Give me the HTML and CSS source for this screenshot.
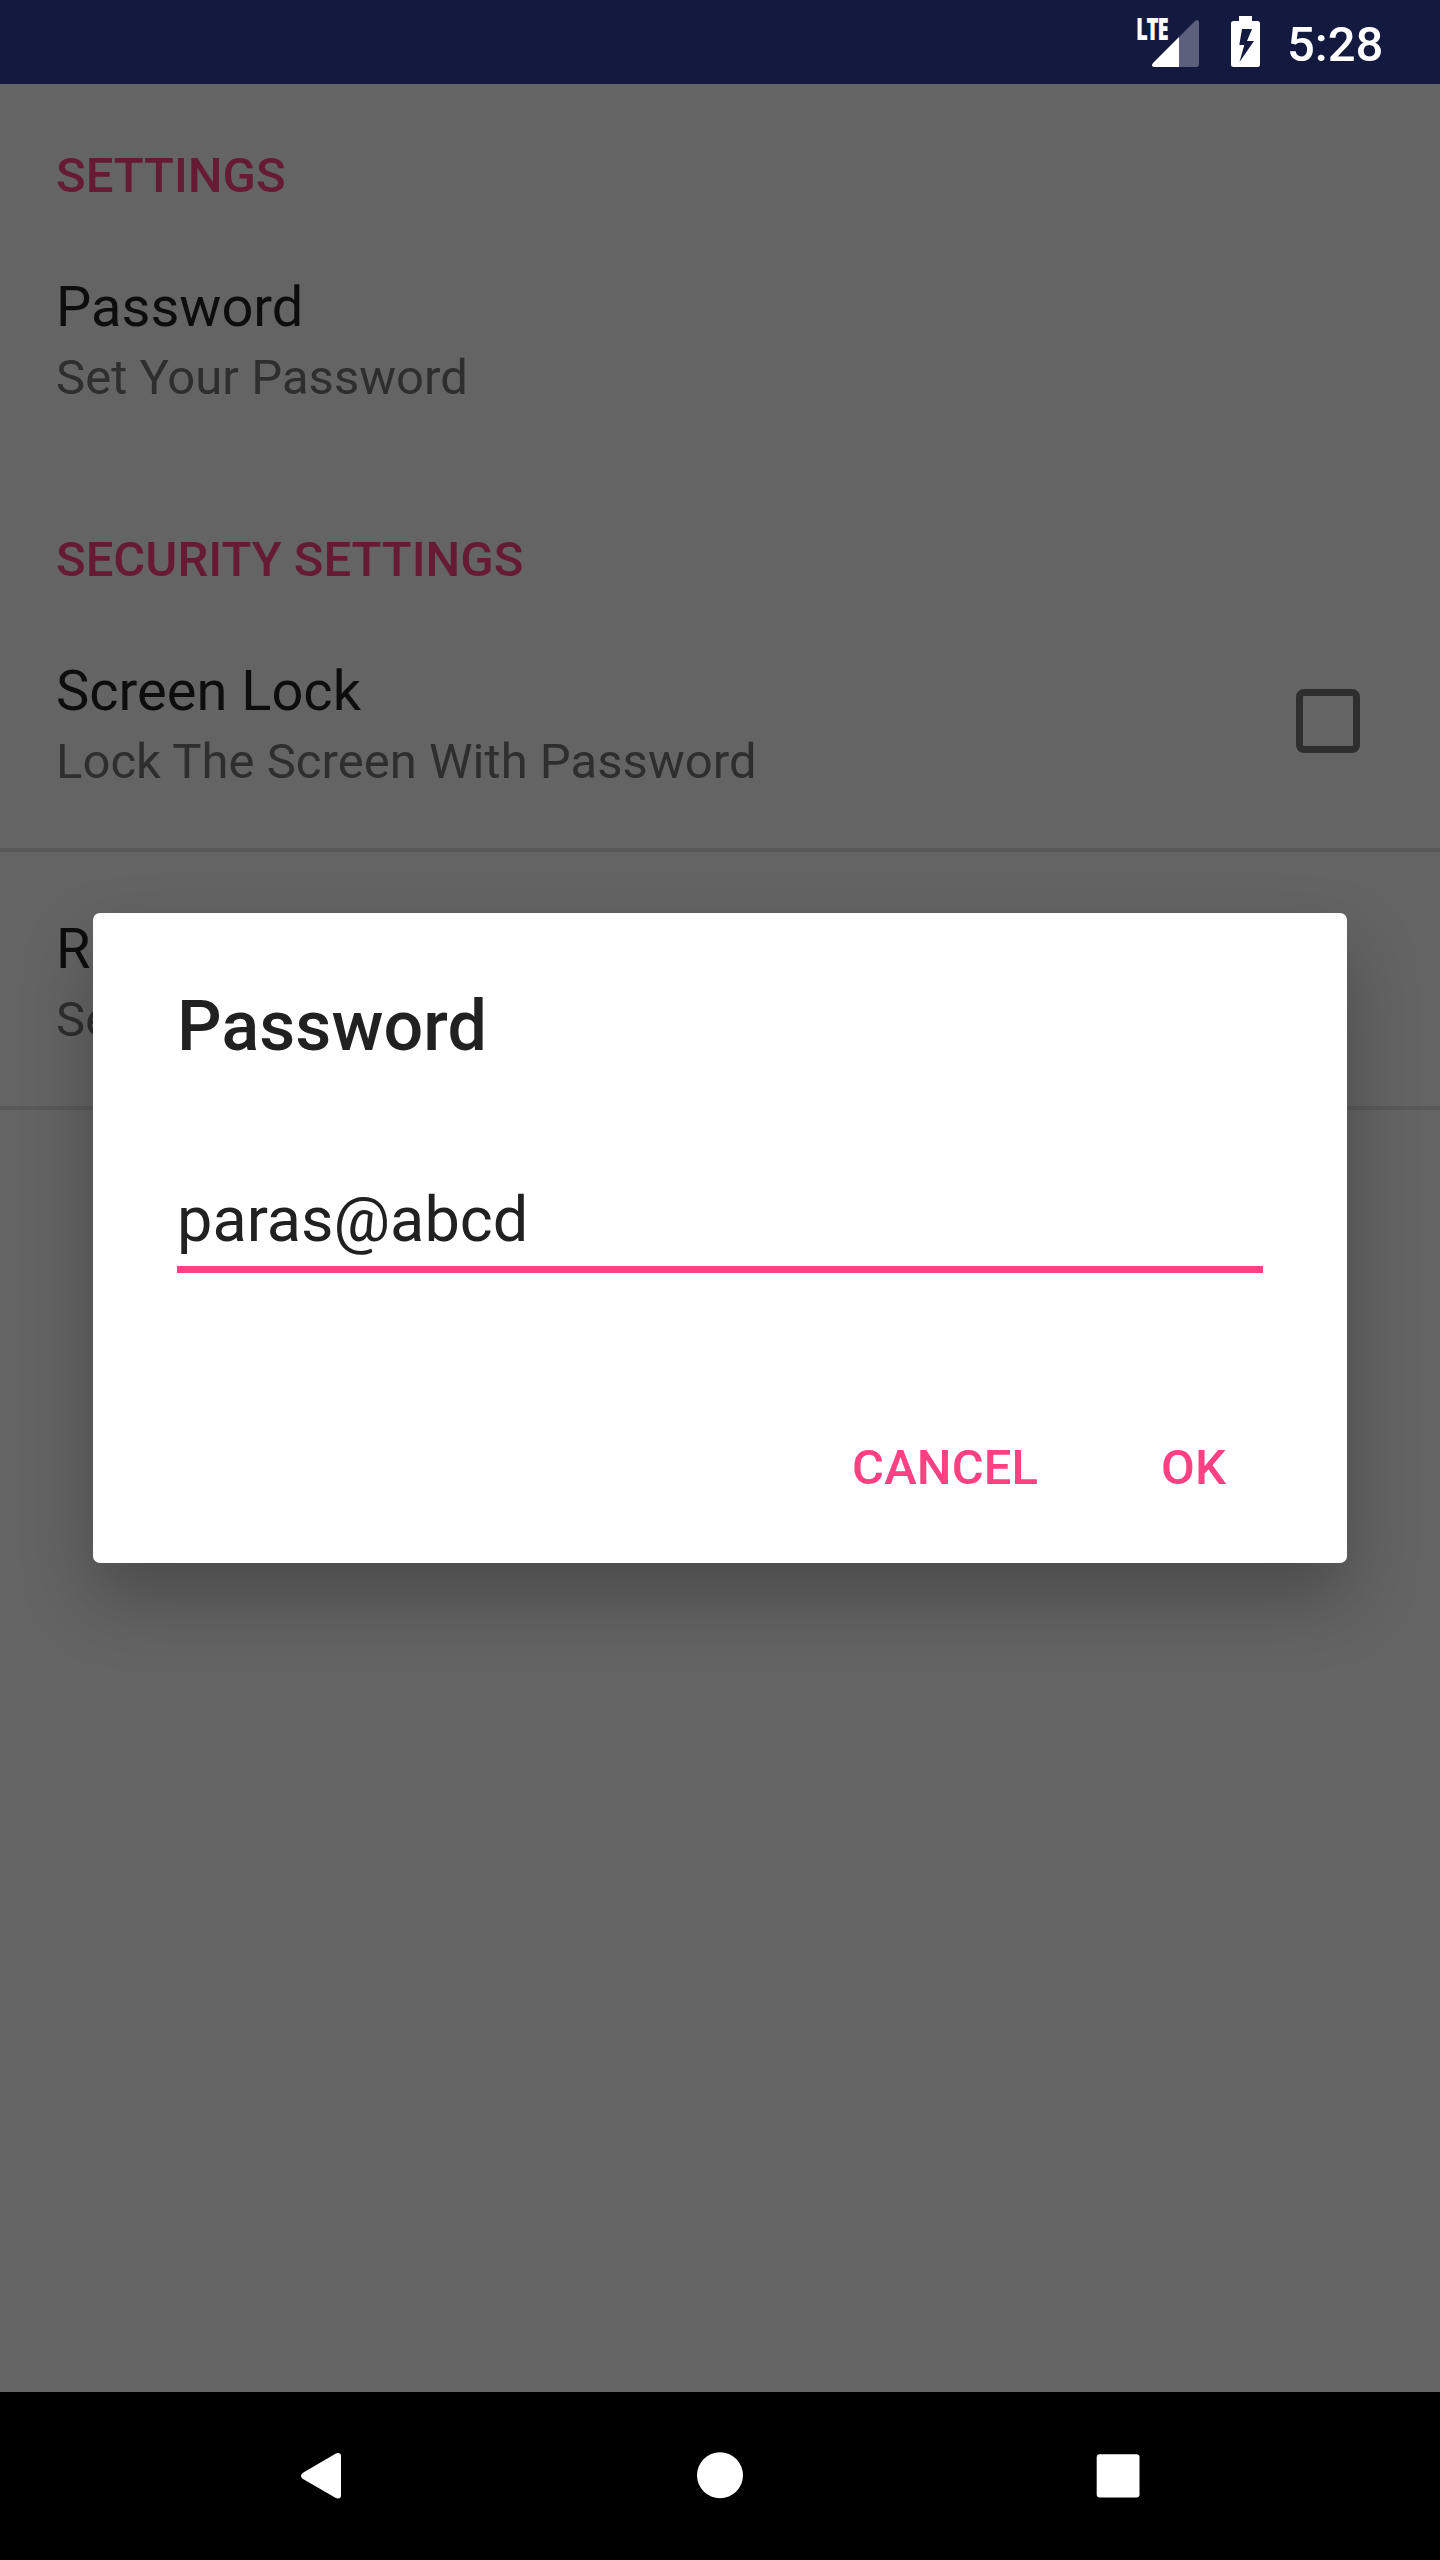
FILE: index.html
```html
<!DOCTYPE html>
<html lang="en">
<head>
<meta charset="utf-8">
<title>Settings</title>
<link rel="stylesheet" href="styles.css">
</head>
<body>
<div class="screen">
  <header class="status-bar">
    <svg class="signal" width="64" height="84" viewBox="1136 0 64 84">
      <text class="lte" transform="translate(1136 39.500) scale(.68 1)" x="0" y="0" textLength="48">LTE</text>
      <path d="M1179 37V67H1154Q1150.500 66 1153 63Z" fill="#fff"/>
      <path d="M1179 37L1195 21Q1199 18.500 1199 23V64Q1199 67 1196 67H1179Z" fill="#5d607c"/>
    </svg>
    <svg class="battery" width="30" height="84" viewBox="1231 0 30 84">
      <path fill="#fff" fill-rule="evenodd" d="M1239 16H1252V21H1257.500Q1260 21 1260 23.500V64.500Q1260 67 1257.500 67H1233.500Q1231 67 1231 64.500V23.500Q1231 21 1233.500 21H1239ZM1242 29L1239.300 45H1244.300L1239.500 62L1254 41H1247L1252 29Z"/>
    </svg>
    <span class="clock">5:28</span>
  </header>

  <main class="settings">
    <h2 class="category">SETTINGS</h2>
    <div class="row">
      <div class="row-text">
        <div class="row-title">Password</div>
        <div class="row-summary">Set Your Password</div>
      </div>
    </div>
    <h2 class="category">SECURITY SETTINGS</h2>
    <div class="row divided">
      <div class="row-text">
        <div class="row-title">Screen Lock</div>
        <div class="row-summary">Lock The Screen With Password</div>
      </div>
      <span class="checkbox"></span>
    </div>
    <div class="row divided">
      <div class="row-text">
        <div class="row-title">R</div>
        <div class="row-summary">Se</div>
      </div>
    </div>
  </main>

  <section class="dialog" role="dialog">
    <h1 class="dialog-title">Password</h1>
    <div class="field">paras@abcd</div>
    <div class="actions">
      <span>CANCEL</span>
      <span>OK</span>
    </div>
  </section>

  <nav class="nav-bar">
    <svg width="48" height="48" viewBox="0 0 48 48"><path d="M35 2Q36.500 1 38 1Q41 1 41 4V43.500Q41 46.500 38 46.500Q36.500 46.500 35 45.500L3 27Q1 25.500 1 24Q1 22 3 20.700Z" fill="#fff"/></svg>
    <svg width="48" height="48" viewBox="0 0 48 48"><circle cx="23" cy="23.300" r="23" fill="#fff"/></svg>
    <svg width="48" height="48" viewBox="0 0 48 48"><rect x="2.700" y="2.300" width="42.800" height="43.200" rx="3" fill="#fff"/></svg>
  </nav>
</div>
</body>
</html>
```

FILE: styles.css
```css
* {
  box-sizing: border-box;
}

body {
  margin: 0;
  font-family: Roboto, "Liberation Sans", sans-serif;
}

.screen {
  position: relative;
  display: flex;
  flex-direction: column;
  width: 1440px;
  height: 2560px;
  overflow: hidden;
  background: #646464;
}

.status-bar {
  display: flex;
  justify-content: flex-end;
  height: 84px;
  padding-right: 56px;
  background: #13193f;
}

.signal {
  margin-right: 31px;
}

.battery {
  margin-right: 26px;
}

.lte {
  font: 800 30px "Open Sans", sans-serif;
  fill: #fff;
}

.clock {
  padding-top: 16px;
  width: 97px;
  font-size: 49px;
  font-weight: 500;
  line-height: 58px;
  color: #fff;
}

.settings {
  flex: 1;
}

.category {
  margin: 0;
  padding: 63px 56px 5px;
  font-size: 49px;
  font-weight: 500;
  line-height: 58px;
  color: #661a33;
}

.row {
  display: flex;
  justify-content: space-between;
  height: 258px;
  padding: 64px 80px 0 56px;
}

.divided {
  border-bottom: 4px solid #595959;
}

.row-text {
  display: flex;
  flex-direction: column;
  gap: 9px;
}

.row-title {
  font-size: 56px;
  line-height: 66px;
  color: #0d0d0d;
}

.row-summary {
  font-size: 49px;
  line-height: 58px;
  letter-spacing: .04px;
  color: #2e2e2e;
}

.checkbox {
  width: 64px;
  height: 64px;
  margin-top: 31px;
  border: 7px solid #2e2e2e;
  border-radius: 8px;
}

.dialog {
  position: absolute;
  top: 913px;
  left: 93px;
  width: 1254px;
  height: 650px;
  padding: 72px 84px 0;
  border-radius: 7px;
  background: #fff;
  box-shadow: 0 35px 70px rgba(0, 0, 0, .26);
  color: #212121;
}

.dialog-title {
  margin: 0;
  font-size: 70px;
  font-weight: 500;
  line-height: 82px;
  letter-spacing: .1px;
}

.field {
  margin-top: 116px;
  height: 90px;
  border-bottom: 7px solid #ff4081;
  font-size: 63px;
  line-height: 74px;
}

.actions {
  display: flex;
  justify-content: flex-end;
  gap: 123px;
  margin-top: 166px;
  padding-right: 37px;
  font-size: 49px;
  font-weight: 500;
  line-height: 58px;
  letter-spacing: .1px;
  color: #ff4081;
}

.nav-bar {
  display: flex;
  justify-content: space-between;
  height: 168px;
  padding: 60px 298px 0 300px;
  background: #000;
}
```
